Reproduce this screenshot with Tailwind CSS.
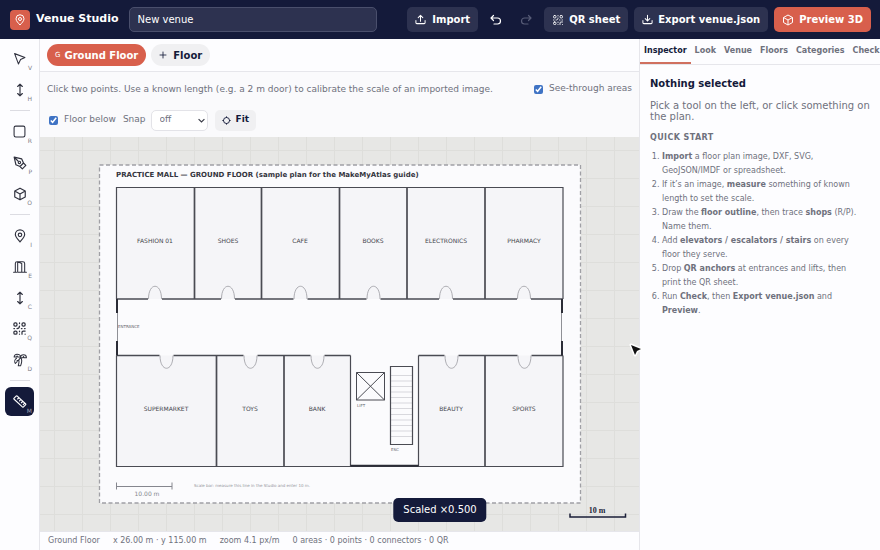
<!DOCTYPE html>
<html lang="en">
<head>
  <meta charset="UTF-8">
  <meta name="viewport" content="width=device-width, initial-scale=1.0">
  <title>Venue Studio</title>
  <script src="https://cdn.jsdelivr.net/npm/@tailwindcss/browser@4"></script>
</head>
<body class="h-screen flex flex-col overflow-hidden bg-[#fdfdff] font-['DejaVu_Sans',sans-serif] text-[9px] text-[#6f717d]">

  <!-- shared icons -->
  <svg class="hidden">
    <defs>
      <g id="i-pin"><path d="M12 22c-3-3.500-8-8-8-12.500a8 8 0 0 1 16 0C20 14 15 18.500 12 22z"/><circle cx="12" cy="10" r="3"/></g>
      <g id="i-updown"><path d="M12 2v20M8 6l4-4 4 4M8 18l4 4 4-4"/></g>
      <g id="i-cube"><path d="M12 2l9 5v10l-9 5-9-5V7zM3 7l9 5 9-5M12 12v10"/></g>
      <g id="i-qr"><rect x="3" y="3" width="5" height="5" rx="2"/><rect x="16" y="3" width="5" height="5" rx="2"/><rect x="3" y="16" width="5" height="5" rx="2"/><path d="M12 3v1M12 8c0 3-1 4-4 4M3 12h1M15 12h1M20 12h1M12 16v1M12 21v0M16 21v-3a2 2 0 0 1 2-2h3M21 21v0"/></g>
    </defs>
  </svg>

  <header class="h-[39px] shrink-0 flex items-center gap-1.5 pl-2.5 pr-[9px] bg-[#141a3a] text-white text-[10px] font-bold">
    <span class="size-5 shrink-0 rounded-[4px] bg-[#d85f4c] flex items-center justify-center">
      <svg class="size-3" viewBox="0 0 24 24" fill="none" stroke="currentColor" stroke-width="2"><use href="#i-pin"/></svg>
    </span>
    <h1 class="text-[11px] whitespace-nowrap">Venue Studio</h1>
    <input type="text" value="New venue" aria-label="Venue name" class="ml-1 w-[248px] min-w-0 h-[25px] px-2 rounded-[5px] border border-[#4a4f6c] bg-[#2d3250] font-normal text-white">
    <div class="ml-auto flex items-center gap-1.5 whitespace-nowrap">
      <button class="h-[25px] px-2 flex items-center gap-1.5 rounded-[5px] bg-[#2d3250]">
        <svg class="size-[11px]" viewBox="0 0 24 24" fill="none" stroke="currentColor" stroke-width="2.200" stroke-linecap="round" stroke-linejoin="round"><path d="M2 14v5a2 2 0 0 0 2 2h16a2 2 0 0 0 2-2v-5M12 16V3M7 8l5-5 5 5"/></svg>
        Import
      </button>
      <button class="w-6 h-[25px] flex items-center justify-center" aria-label="Undo">
        <svg class="size-3" viewBox="0 0 24 24" fill="none" stroke="currentColor" stroke-width="2.400" stroke-linecap="round" stroke-linejoin="round"><path d="M7 3L2 8l5 5M2 8h13a6 6 0 0 1 0 12H8"/></svg>
      </button>
      <button class="w-6 h-[25px] flex items-center justify-center text-[#575c77]" aria-label="Redo" disabled>
        <svg class="size-3" viewBox="0 0 24 24" fill="none" stroke="currentColor" stroke-width="2.400" stroke-linecap="round" stroke-linejoin="round"><path d="M17 3l5 5-5 5M22 8H9a6 6 0 0 0 0 12h7"/></svg>
      </button>
      <button class="h-[25px] px-2 flex items-center gap-[5px] rounded-[5px] bg-[#2d3250]">
        <svg class="size-3" viewBox="0 0 24 24" fill="none" stroke="currentColor" stroke-width="1.800" stroke-linecap="round"><use href="#i-qr"/></svg>
        QR sheet
      </button>
      <button class="h-[25px] px-2 flex items-center gap-[5px] rounded-[5px] bg-[#2d3250]">
        <svg class="size-[11px]" viewBox="0 0 24 24" fill="none" stroke="currentColor" stroke-width="2.200" stroke-linecap="round" stroke-linejoin="round"><path d="M2 14v5a2 2 0 0 0 2 2h16a2 2 0 0 0 2-2v-5M12 3v12M7 10l5 5 5-5"/></svg>
        Export venue.json
      </button>
      <button class="h-[25px] px-2 flex items-center gap-[5px] rounded-[5px] bg-[#d85f4c]">
        <svg class="size-3" viewBox="0 0 24 24" fill="none" stroke="currentColor" stroke-width="2" stroke-linejoin="round"><use href="#i-cube"/></svg>
        Preview 3D
      </button>
    </div>
  </header>

  <div class="flex-1 min-h-0 flex">

    <!-- tools -->
    <nav class="w-10 shrink-0 border-r border-[#e6e6eb] pt-[5px] flex flex-col items-center gap-0.5 text-[#30323f]" aria-label="Tools">
      <button class="relative size-[29px] flex items-center justify-center" aria-label="Select">
        <svg class="size-[13px]" viewBox="0 0 24 24" fill="none" stroke="currentColor" stroke-width="2" stroke-linejoin="round"><path d="M3 3l19 7-8 4-4 8z"/></svg>
        <span class="absolute right-0.5 bottom-0.5 text-[6px] leading-[6px] text-[#7d7e88]">V</span>
      </button>
      <button class="relative size-[29px] flex items-center justify-center" aria-label="Pan">
        <svg class="size-[14px]" viewBox="0 0 24 24" fill="none" stroke="currentColor" stroke-width="2" stroke-linecap="round" stroke-linejoin="round"><use href="#i-updown"/></svg>
        <span class="absolute right-0.5 bottom-0.5 text-[6px] leading-[6px] text-[#7d7e88]">H</span>
      </button>
      <hr class="w-5 my-1 border-[#dcdce2]">
      <button class="relative size-[29px] flex items-center justify-center" aria-label="Rectangle">
        <svg class="size-[13px]" viewBox="0 0 24 24" fill="none" stroke="currentColor" stroke-width="2"><rect x="2" y="2" width="20" height="20" rx="3"/></svg>
        <span class="absolute right-0.5 bottom-0.5 text-[6px] leading-[6px] text-[#7d7e88]">R</span>
      </button>
      <button class="relative size-[29px] flex items-center justify-center" aria-label="Polygon">
        <svg class="size-[14px]" viewBox="0 0 24 24" fill="none" stroke="currentColor" stroke-width="2" stroke-linejoin="round"><path d="M2 2l13 3 3 7-6 6-7-3zM2 2l7 7M18 12l4 4-6 6-4-4"/><circle cx="11" cy="11" r="2"/></svg>
        <span class="absolute right-0.5 bottom-0.5 text-[6px] leading-[6px] text-[#7d7e88]">P</span>
      </button>
      <button class="relative size-[29px] flex items-center justify-center" aria-label="Object">
        <svg class="size-[14px]" viewBox="0 0 24 24" fill="none" stroke="currentColor" stroke-width="2" stroke-linejoin="round"><use href="#i-cube"/></svg>
        <span class="absolute right-0.5 bottom-0.5 text-[6px] leading-[6px] text-[#7d7e88]">O</span>
      </button>
      <hr class="w-5 my-1 border-[#dcdce2]">
      <button class="relative size-[29px] flex items-center justify-center" aria-label="Point">
        <svg class="size-[14px]" viewBox="0 0 24 24" fill="none" stroke="currentColor" stroke-width="2"><use href="#i-pin"/></svg>
        <span class="absolute right-0.5 bottom-0.5 text-[6px] leading-[6px] text-[#7d7e88]">I</span>
      </button>
      <button class="relative size-[29px] flex items-center justify-center" aria-label="Entrance">
        <svg class="size-[14px]" viewBox="0 0 24 24" fill="none" stroke="currentColor" stroke-width="1.800" stroke-linecap="round" stroke-linejoin="round"><path d="M1 21h5M14 21h9M4 21V6a3 3 0 0 1 3-3h10a3 3 0 0 1 3 3v15M8 3v18h7V6l-7-3"/></svg>
        <span class="absolute right-0.5 bottom-0.5 text-[6px] leading-[6px] text-[#7d7e88]">E</span>
      </button>
      <button class="relative size-[29px] flex items-center justify-center" aria-label="Connector">
        <svg class="size-[14px]" viewBox="0 0 24 24" fill="none" stroke="currentColor" stroke-width="2" stroke-linecap="round" stroke-linejoin="round"><use href="#i-updown"/></svg>
        <span class="absolute right-0.5 bottom-0.5 text-[6px] leading-[6px] text-[#7d7e88]">C</span>
      </button>
      <button class="relative size-[29px] flex items-center justify-center" aria-label="QR anchor">
        <svg class="size-[15px]" viewBox="0 0 24 24" fill="none" stroke="currentColor" stroke-width="2" stroke-linecap="round"><use href="#i-qr"/></svg>
        <span class="absolute right-0.5 bottom-0.5 text-[6px] leading-[6px] text-[#7d7e88]">Q</span>
      </button>
      <button class="relative size-[29px] flex items-center justify-center" aria-label="Decor">
        <svg class="size-[14px]" viewBox="0 0 24 24" fill="none" stroke="currentColor" stroke-width="1.800" stroke-linecap="round" stroke-linejoin="round"><path d="M13 7c0-3-3-5-6-5S2 5 2 7h4l1-2 1 2h5c0-3 2-4 5-4s5 2 5 5h-4l-1-2-1 2h-4M6 9c-3 2-4 6-2 9l3-3v-2h2l4-5M13 8c3 3 2 9 0 14H9c1-4 2-7 1-10"/></svg>
        <span class="absolute right-0.5 bottom-0.5 text-[6px] leading-[6px] text-[#7d7e88]">D</span>
      </button>
      <hr class="w-5 my-1 border-[#dcdce2]">
      <button class="relative size-[29px] flex items-center justify-center rounded-[6px] bg-[#141a3a] text-white" aria-label="Measure" aria-pressed="true">
        <svg class="size-[15px]" viewBox="0 0 24 24" fill="none" stroke="currentColor" stroke-width="1.800" stroke-linecap="round" stroke-linejoin="round"><path d="M8 3l14 13a1 1 0 0 1 0 1l-4 4a1 1 0 0 1-1 0L3 8a1 1 0 0 1 0-1l4-4a1 1 0 0 1 1 0zM11 6l-2 2M14 9l-2 2M17 12l-2 2M20 15l-2 2"/></svg>
        <span class="absolute right-0.5 bottom-0.5 text-[6px] leading-[6px] text-[#a0a3b3]">M</span>
      </button>
    </nav>

    <main class="flex-1 min-w-0 flex flex-col border-r border-[#e6e6eb]">
      <div class="h-[33px] shrink-0 flex items-center gap-[5px] px-[7px] border-b border-[#e6e6eb] text-[10px] font-bold">
        <button class="h-[22px] px-2 flex items-center gap-1 rounded-full bg-[#d85f4c] text-white"><span class="text-[7px] font-normal">G</span>Ground Floor</button>
        <button class="h-[22px] px-2 flex items-center gap-1.5 rounded-full bg-[#f0f0f2] text-[#141a3a]">
          <svg class="size-2" viewBox="0 0 24 24" fill="none" stroke="currentColor" stroke-width="2.500" stroke-linecap="round"><path d="M12 3v18M3 12h18"/></svg>
          Floor
        </button>
      </div>

      <div class="shrink-0 flex flex-wrap items-center gap-x-[7px] gap-y-[9px] px-[7px] py-1.5 bg-[#fafafc]">
        <p class="flex-1 min-w-[460px] leading-[22px]">Click two points. Use a known length (e.g. a 2 m door) to calibrate the scale of an imported image.</p>
        <label class="h-[22px] flex items-center gap-1.5 whitespace-nowrap"><input type="checkbox" checked class="size-[9px] accent-[#3f73c4]">See-through areas</label>
        <div class="w-full flex items-center gap-[7px]">
          <label class="h-[22px] pl-0.5 flex items-center gap-1.5"><input type="checkbox" checked class="size-[9px] accent-[#3f73c4]">Floor below</label>
          <label class="h-[22px] flex items-center gap-[5px]">Snap
            <span class="relative flex items-center">
              <select class="appearance-none w-[57px] h-[21px] pl-2 rounded-[5px] border border-[#e3e3e8] bg-white">
                <option>off</option>
                <option>0.5 m</option>
                <option>1 m</option>
              </select>
              <svg class="absolute right-[3px] size-[7px] pointer-events-none" viewBox="0 0 24 24" fill="none" stroke="#3a3c48" stroke-width="4"><path d="M2 7l10 10L22 7"/></svg>
            </span>
          </label>
          <button class="h-[21px] px-[7px] flex items-center gap-[5px] rounded-[5px] bg-[#f0f0f2] font-bold text-[#141a3a]">
            <svg class="size-[9px]" viewBox="0 0 24 24" fill="none" stroke="currentColor" stroke-width="2.500"><circle cx="12" cy="12" r="8"/><path d="M12 1v4M12 19v4M1 12h4M19 12h4"/></svg>
            Fit
          </button>
        </div>
      </div>

      <!-- floor plan -->
      <div class="relative flex-1 min-h-0 bg-[#e7e7e5]">
        <svg class="absolute inset-0 size-full" viewBox="40 137 599 394" preserveAspectRatio="xMidYMid slice" font-family="DejaVu Sans, sans-serif" fill="none">
          <defs>
            <pattern id="grid" x="54" y="150" width="28" height="28" patternUnits="userSpaceOnUse"><path d="M0 .5h28M.5 0v28" stroke="#dededb"/></pattern>
          </defs>
          <rect x="40" y="137" width="600" height="394" fill="url(#grid)"/>
          <rect x="99.500" y="165" width="481" height="338" fill="#fbfbfd" stroke="#a0a0a5" stroke-width="1.300" stroke-dasharray="4 2.500"/>

          <text x="116" y="177" font-size="7" font-weight="bold" fill="#34353d">PRACTICE MALL — GROUND FLOOR (sample plan for the MakeMyAtlas guide)</text>

          <path d="M116.500 187.500H563V299H116.500zM116.500 355.500H350.500V466.500H116.500zM418.500 355.500H563V466.500H418.500z" fill="#f5f5f8"/>
          <g stroke="#4a4b53">
            <path d="M116.500 299V187.500H563V299M116.500 355.500V466.500H563V355.500M350.500 355.500V466M418.500 355.500V466" stroke-width="1.200"/>
            <path d="M116.500 299H148M162 299h59M235 299h58.500M307.500 299h59M380.500 299h58.500M453 299h64M531 299h32" stroke-width="1.300"/>
            <path d="M116.500 355.500H159.500M173.500 355.500h70M257.500 355.500h53M324.500 355.500h26M418.500 355.500h26M458.500 355.500h59M531.500 355.500H563" stroke-width="1.300"/>
            <path d="M194.500 187.500V299M261.500 187.500V299M339.500 187.500V299M407 187.500V299M485 187.500V299M216.500 355.500V466.500M284 355.500V466.500M485 355.500V466.500" stroke-width="1.700"/>
          </g>
          <path d="M117 299v14M117 341v14.500M562 299v14M562 341v14.500M350.500 465.800H418.500" stroke="#2b2c36" stroke-width="2"/>
          <path d="M117.500 313v28M561.500 313v28" stroke="#8f9096"/>

          <!-- door swings -->
          <g stroke="#9a9ba1" stroke-width=".8">
            <path d="M148.500 299c0-17 13-17 13 0M221.500 299c0-17 13-17 13 0M294 299c0-17 13-17 13 0M367 299c0-17 13-17 13 0M439.500 299c0-17 13-17 13 0M517.500 299c0-17 13-17 13 0"/>
            <path d="M160 355.500c0 17 13 17 13 0M244 355.500c0 17 13 17 13 0M311 355.500c0 17 13 17 13 0M445 355.500c0 17 13 17 13 0M518 355.500c0 17 13 17 13 0"/>
          </g>

          <g font-size="6" fill="#45464e" text-anchor="middle">
            <text x="155" y="243">FASHION 01</text>
            <text x="228" y="243">SHOES</text>
            <text x="300" y="243">CAFE</text>
            <text x="373" y="243">BOOKS</text>
            <text x="446" y="243">ELECTRONICS</text>
            <text x="524" y="243">PHARMACY</text>
            <text x="166" y="411">SUPERMARKET</text>
            <text x="250" y="411">TOYS</text>
            <text x="317" y="411">BANK</text>
            <text x="451" y="411">BEAUTY</text>
            <text x="524" y="411">SPORTS</text>
          </g>
          <g font-size="4" fill="#63646c">
            <text x="118" y="328">ENTRANCE</text>
            <text x="357" y="407">LIFT</text>
            <text x="391" y="451">ESC</text>
          </g>

          <path d="M356.500 372.500h28v27.500h-28zM356.500 372.500l28 27.500M384.500 372.500l-28 27.500" stroke="#4a4b53"/>
          <path d="M390.500 375.500h22M390.500 381h22M390.500 386.500h22M390.500 392h22M390.500 397.500h22M390.500 403h22M390.500 408.500h22M390.500 414.500h22M390.500 420h22M390.500 425.500h22M390.500 431h22M390.500 436.500h22" stroke="#cfcfd4" stroke-width=".8"/>
          <path d="M390.500 366.500h22v78h-22z" stroke="#4a4b53" stroke-width="1.200"/>

          <path d="M116.500 486.500h55.500M116.500 482.500v7M172 482.500v7" stroke="#85868e"/>
          <text x="147" y="496" font-size="6" fill="#85868e" text-anchor="middle">10.00 m</text>
          <text x="194" y="487" font-size="4" fill="#94959c">Scale bar: measure this line in the Studio and enter 10 m.</text>

          <path d="M570 513.500v3.500h55.500v-3.500" stroke="#1b1f38" stroke-width="1.500"/>
          <text x="597" y="513" font-family="Liberation Serif, serif" font-size="8" font-weight="bold" fill="#1b1f38" text-anchor="middle">10 m</text>
        </svg>
        <!-- pointer -->
        <svg class="absolute -right-1 top-[206px] z-10 size-[14px]" viewBox="0 0 14 14"><path d="M2 2l10 4-4 2-2 4z" fill="#111" stroke="#fff" stroke-width="3" stroke-linejoin="round" paint-order="stroke"/></svg>
      </div>

      <footer class="h-[19px] shrink-0 flex items-center gap-[13px] px-2 border-t border-[#e6e6eb] text-[8px] whitespace-nowrap">
        <span>Ground Floor</span>
        <span>x 26.00 m · y 115.00 m</span>
        <span>zoom 4.1 px/m</span>
        <span>0 areas · 0 points · 0 connectors · 0 QR</span>
      </footer>
    </main>

    <aside class="w-60 shrink-0 overflow-hidden">
      <div class="h-[26px] flex border-b border-[#e6e6eb] text-[8px] font-bold" role="tablist">
        <button role="tab" aria-selected="true" class="px-1 border-b-2 border-[#d0705f] text-[#141a3a]">Inspector</button>
        <button role="tab" class="px-1 border-b-2 border-transparent">Look</button>
        <button role="tab" class="px-1 border-b-2 border-transparent">Venue</button>
        <button role="tab" class="px-1 border-b-2 border-transparent">Floors</button>
        <button role="tab" class="px-1 border-b-2 border-transparent">Categories</button>
        <button role="tab" class="px-1 border-b-2 border-transparent">Check</button>
      </div>
      <div class="pl-2.5 pr-2 pt-3">
        <h2 class="text-[10px] leading-[14px] font-bold text-[#141a3a]">Nothing selected</h2>
        <p class="mt-[9px] text-[10px] leading-[11px]">Pick a tool on the left, or click something on the plan.</p>
        <h3 class="mt-2.5 text-[8px] leading-3 font-bold tracking-wider">QUICK START</h3>
        <ol class="mt-1.5 pl-3 pr-2 list-decimal text-[8px] leading-[14px]">
          <li><b>Import</b> a floor plan image, DXF, SVG, GeoJSON/IMDF or spreadsheet.</li>
          <li>If it’s an image, <b>measure</b> something of known length to set the scale.</li>
          <li>Draw the <b>floor outline</b>, then trace <b>shops</b> (R/P). Name them.</li>
          <li>Add <b>elevators / escalators / stairs</b> on every floor they serve.</li>
          <li>Drop <b>QR anchors</b> at entrances and lifts, then print the QR sheet.</li>
          <li>Run <b>Check</b>, then <b>Export venue.json</b> and <b>Preview</b>.</li>
        </ol>
      </div>
    </aside>
  </div>

  <div role="status" class="fixed bottom-7 left-1/2 -translate-x-1/2 px-2.5 rounded-[5px] bg-[#141a3a] text-white text-[10px] leading-6 whitespace-nowrap">Scaled ×0.500</div>
</body>
</html>
